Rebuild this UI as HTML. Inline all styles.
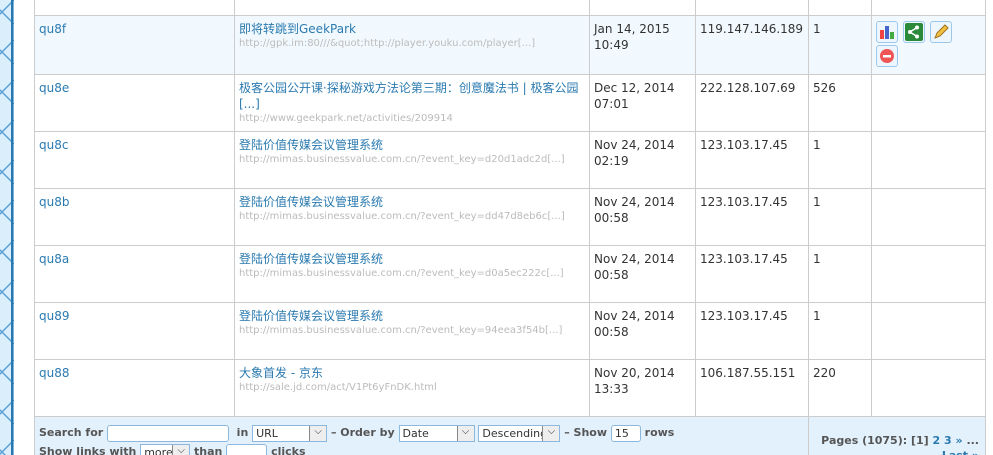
<!DOCTYPE html><html><head><meta charset="utf-8"><style>
html,body{margin:0;width:993px;height:455px;overflow:hidden}
body{background:#fff;font-family:"DejaVu Sans","Liberation Sans","Noto Sans CJK SC",sans-serif;position:relative}
.deco{position:absolute;left:0;top:0;width:14px;height:455px}
table{position:absolute;left:34px;top:-2px;border-collapse:collapse;table-layout:fixed;width:951px}
td{border:1px solid #ccc;vertical-align:top;padding:5px 4px;font-size:12px;color:#333;height:46px;line-height:16px}
a{color:#2a7ab0;text-decoration:none}
.u{font-size:10px;color:#bbb;display:block;line-height:14px;white-space:nowrap;overflow:hidden}
.t a{font-size:12px}
tr.hl td{background:#f2f9fe}
.ic{display:inline-block;width:20px;height:20px;border:1px solid #9cc8ec;border-radius:3px;background:#eef6fd;margin:0 5px 2px 0;vertical-align:top;position:relative}
tr.foot td{background:#e3f1fc;font-size:11px;font-weight:bold;color:#555;height:40px;padding:6px 4px 0 4px;line-height:19px;white-space:nowrap}
input,.sel{display:inline-block;border:1px solid #8cb8e0;border-radius:3px;background:#fff;vertical-align:middle;font-size:11px;font-weight:normal;color:#333;box-sizing:border-box;height:17px;padding:0 3px;line-height:15px;position:relative;font-family:inherit}
.sel{border-radius:0;padding-right:20px;overflow:hidden}
.sel:after{content:"⌵";position:absolute;right:0;top:0;width:16px;height:15px;border-left:1px solid #888;background:#eee;text-align:center;font-size:10px;line-height:12px;color:#333}
</style></head><body>
<svg class="deco" viewBox="0 0 14 455" preserveAspectRatio="none">
<rect width="14" height="455" fill="#dbeefb"/>
<g stroke="#5a9fd4" stroke-width="1.5" fill="none">
<path d="M-10 0 L14 24 M-10 24 L14 0 M-10 40 L14 64 M-10 64 L14 40 M-10 80 L14 104 M-10 104 L14 80 M-10 120 L14 144 M-10 144 L14 120 M-10 160 L14 184 M-10 184 L14 160 M-10 200 L14 224 M-10 224 L14 200 M-10 240 L14 264 M-10 264 L14 240 M-10 280 L14 304 M-10 304 L14 280 M-10 320 L14 344 M-10 344 L14 320 M-10 360 L14 384 M-10 384 L14 360 M-10 400 L14 424 M-10 424 L14 400 M-10 440 L14 464 M-10 464 L14 440"/>
</g>
<rect x="11" width="2.5" height="455" fill="#2a78b0"/>
</svg>
<table>
<colgroup><col style="width:200px"><col style="width:355px"><col style="width:106px"><col style="width:113px"><col style="width:63px"><col style="width:114px"></colgroup>
<tr><td style="height:16px;padding:0"></td><td style="height:16px;padding:0"></td><td style="height:16px;padding:0"></td><td style="height:16px;padding:0"></td><td style="height:16px;padding:0"></td><td style="height:16px;padding:0"></td></tr>
<tr class="hl"><td><a>qu8f</a></td><td class="t"><a>即将转跳到GeekPark</a><span class="u">http://gpk.im:80///&amp;quot;http://player.youku.com/player[...]</span></td><td>Jan 14, 2015<br>10:49</td><td style="white-space:nowrap">119.147.146.189</td><td>1</td><td>
<span class="ic"><svg width="20" height="20"><rect x="3" y="8" width="4" height="9" fill="#e44"/><rect x="8" y="4" width="4" height="13" fill="#46c"/><rect x="13" y="10" width="4" height="7" fill="#4a4"/></svg></span><span class="ic"><svg width="20" height="20"><rect x="1" y="1" width="18" height="18" rx="2" fill="#2a8a3a"/><circle cx="13" cy="5.5" r="2" fill="#fff"/><circle cx="6" cy="10" r="2" fill="#fff"/><circle cx="13" cy="14.5" r="2" fill="#fff"/><path d="M13 5.5L6 10L13 14.5" stroke="#fff" stroke-width="1.5" fill="none"/></svg></span><span class="ic"><svg width="20" height="20"><path d="M4 16L6 11L14 3L17 6L9 14Z" fill="#f0c040" stroke="#a07020"/></svg></span><br><span class="ic"><svg width="20" height="20"><circle cx="10" cy="10" r="7" fill="#e55"/><rect x="6" y="9" width="8" height="2.5" fill="#fff"/></svg></span></td></tr>
<tr><td><a>qu8e</a></td><td class="t"><a>极客公园公开课·探秘游戏方法论第三期：创意魔法书 | 极客公园<br>[...]</a><span class="u">http://www.geekpark.net/activities/209914</span></td><td>Dec 12, 2014<br>07:01</td><td>222.128.107.69</td><td>526</td><td></td></tr>
<tr><td><a>qu8c</a></td><td class="t"><a>登陆价值传媒会议管理系统</a><span class="u">http://mimas.businessvalue.com.cn/?event_key=d20d1adc2d[...]</span></td><td>Nov 24, 2014<br>02:19</td><td>123.103.17.45</td><td>1</td><td></td></tr>
<tr><td><a>qu8b</a></td><td class="t"><a>登陆价值传媒会议管理系统</a><span class="u">http://mimas.businessvalue.com.cn/?event_key=dd47d8eb6c[...]</span></td><td>Nov 24, 2014<br>00:58</td><td>123.103.17.45</td><td>1</td><td></td></tr>
<tr><td><a>qu8a</a></td><td class="t"><a>登陆价值传媒会议管理系统</a><span class="u">http://mimas.businessvalue.com.cn/?event_key=d0a5ec222c[...]</span></td><td>Nov 24, 2014<br>00:58</td><td>123.103.17.45</td><td>1</td><td></td></tr>
<tr><td><a>qu89</a></td><td class="t"><a>登陆价值传媒会议管理系统</a><span class="u">http://mimas.businessvalue.com.cn/?event_key=94eea3f54b[...]</span></td><td>Nov 24, 2014<br>00:58</td><td>123.103.17.45</td><td>1</td><td></td></tr>
<tr><td><a>qu88</a></td><td class="t"><a>大象首发 - 京东</a><span class="u">http://sale.jd.com/act/V1Pt6yFnDK.html</span></td><td>Nov 20, 2014<br>13:33</td><td>106.187.55.151</td><td>220</td><td></td></tr>
<tr class="foot"><td colspan="4">Search for <input style="width:122px"> &nbsp;in <span class="sel" style="width:75px">URL</span> – Order by <span class="sel" style="width:76px">Date</span> <span class="sel" style="width:82px">Descending</span> – Show <input style="width:30px" value="15"> rows<br>Show links with <span class="sel" style="width:50px">more</span> than <input style="width:41px"> clicks</td><td colspan="2" style="text-align:right;padding:16px 6px 0 0;line-height:15px">Pages (1075): [1] <a>2</a> <a>3</a> <a>»</a> ...<br><a>Last »</a></td></tr>
</table>
</body></html>
